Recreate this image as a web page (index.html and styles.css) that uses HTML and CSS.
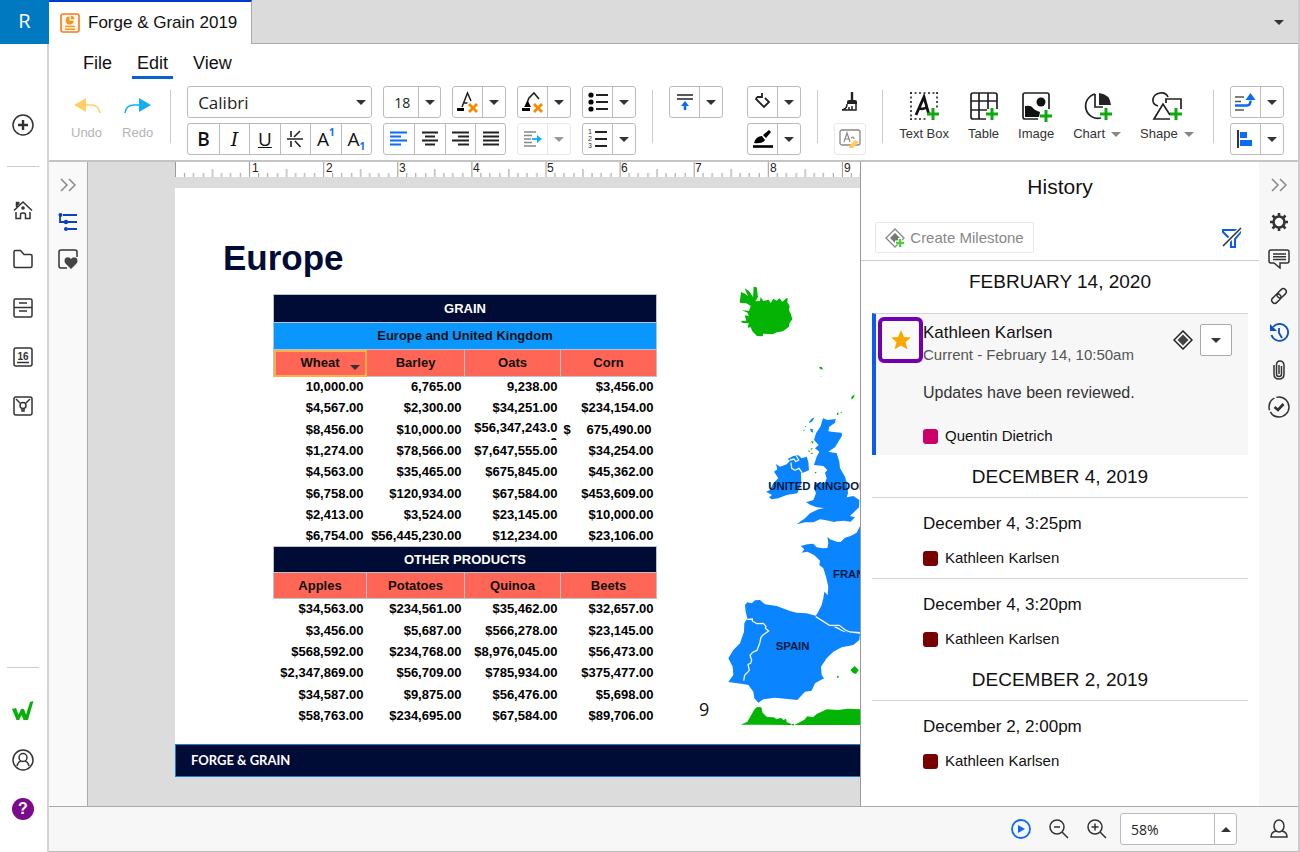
FILE: index.html
```
<!DOCTYPE html>
<html lang="en">
  <head>
    <meta charset="UTF-8" />
    <meta name="viewport" content="width=device-width, initial-scale=1.0" />
    <title>Forge &amp; Grain 2019</title>
    <link rel="stylesheet" href="styles.css">
  </head>
  <body>
    <nav class="rail">
      <a class="logo" href="#">R</a>
      <button class="rail-btn rail-first" aria-label="Create">
        <svg width="22" height="22" viewBox="0 0 22 22"><circle cx="11" cy="11" r="10"/><path d="M11 6v10M6 11h10" stroke-width="2.4"/></svg>
      </button>
      <hr>
      <button class="rail-btn" aria-label="Home">
        <svg width="20" height="20" viewBox="0 0 20 20"><path d="M1 10.500L10 2l9 8.500M3.500 7V2.500H6M3 12v6.500h4.500V14.500q0-1.500 2.500-1.500t2.500 1.500v4H17V12"/><path d="M3 2h3.500v2L3 7z" fill="#333" stroke="none"/><circle cx="10" cy="8" r="1.800" fill="#333" stroke="none"/></svg>
      </button>
      <button class="rail-btn" aria-label="Files">
        <svg width="20" height="20" viewBox="0 0 20 20"><path d="M1 17V3q0-1.500 1.500-1.500h5L11 5.500h6.500Q19 5.500 19 7v10q0 1.500-1.500 1.500h-15Q1 18.500 1 17z"/></svg>
      </button>
      <button class="rail-btn" aria-label="Records">
        <svg width="20" height="20" viewBox="0 0 20 20"><rect x="1" y="1" width="18" height="18" rx="1.500"/><path d="M1 9.500h18M6 5h8M6 13h8"/></svg>
      </button>
      <button class="rail-btn" aria-label="Calendar">
        <svg width="20" height="20" viewBox="0 0 20 20"><rect x="1" y="1" width="18" height="18" rx="2"/><path d="M4 15.500h12"/><text x="10" y="12.500" text-anchor="middle" class="cal-text">16</text></svg>
      </button>
      <button class="rail-btn" aria-label="Insights">
        <svg width="20" height="20" viewBox="0 0 20 20"><rect x="1" y="1" width="18" height="18" rx="2"/><path d="M3 3l4 4M17 3l-4 4M9 12.500v2.500h2v-2.500"/><circle cx="10" cy="9.500" r="3"/></svg>
      </button>
      <div class="spacer"></div>
      <hr>
      <button class="rail-btn" aria-label="Workiva">
        <svg width="22" height="20" viewBox="0 0 22 20"><path d="M0 8l4-1 2.500 6.500L9 8h3l2 5.500L18 1l3.500-1L16 19h-4.500l-2-5-2.300 5H4.500z" fill="#0cae0c" stroke="none"/></svg>
      </button>
      <button class="rail-btn" aria-label="Account">
        <svg width="22" height="22" viewBox="0 0 22 22"><circle cx="11" cy="11" r="10"/><circle cx="11" cy="8.500" r="4"/><path d="M5 17q1-4.500 4-5M17 17q-1-4.500-4-5"/></svg>
      </button>
      <button class="rail-btn" aria-label="Help"><span class="help">?</span></button>
    </nav>

    <div class="app">
      <header class="tabs">
        <a class="tab" href="#">
          <svg width="20" height="20" viewBox="0 0 20 20"><rect x="1" y="1" width="18" height="18" rx="2" fill="#fff7ec" stroke="#f47a20" stroke-width="1.600"/><path d="M5 13.500h10M5 16.200h10" stroke="#f7941d" stroke-width="1.500"/><path d="M9.500 3.500a4 4 0 1 0 4.200 4.200H9.500z" fill="#f7941d"/><path d="M11 2.800v3.400h3.400A3.500 3.500 0 0 0 11 2.800z" fill="#f7941d"/></svg>
          Forge &amp; Grain 2019
        </a>
        <button class="tabs-menu" aria-label="Open tabs"><i class="caret"></i></button>
      </header>

      <nav class="menu">
        <a href="#">File</a>
        <a href="#" class="active">Edit</a>
        <a href="#">View</a>
      </nav>

      <div class="toolbar">
        <div class="history-tools">
          <button class="tool off">
            <svg width="28" height="20" viewBox="0 0 28 20"><path d="M1 8l12-7v14z" fill="#ffcf66"/><path d="M12 8h6q8 0 9 8" stroke="#ffcf66" stroke-width="1.600"/></svg>
            <span>Undo</span>
          </button>
          <button class="tool off">
            <svg width="28" height="20" viewBox="0 0 28 20"><path d="M27 8L15 1v14z" fill="#12aef5"/><path d="M16 8h-6q-8 0-9 8" stroke="#12aef5" stroke-width="1.600"/></svg>
            <span>Redo</span>
          </button>
        </div>
        <div class="sep"></div>

        <div class="stack font-stack">
          <div class="pick font-pick">
            <select aria-label="Font"><option>Calibri</option></select><i class="caret"></i>
          </div>
          <div class="bar">
            <button class="glyph bold" aria-label="Bold">B</button>
            <button class="glyph italic" aria-label="Italic">I</button>
            <button class="glyph under" aria-label="Underline">U</button>
            <button aria-label="Strikethrough"><svg width="18" height="20" viewBox="0 0 18 20"><path d="M1 10h16M5 2v6M14 2L8 8M5 12v6M9 12l5.500 6" stroke="#222" stroke-width="1.600"/></svg></button>
            <button class="glyph" aria-label="Superscript">A<sup>1</sup></button>
            <button class="glyph" aria-label="Subscript">A<sub>1</sub></button>
          </div>
        </div>

        <div class="stack size-stack">
          <div class="pair">
            <div class="pick size-pick">
              <select aria-label="Font size"><option>18</option></select><i class="caret"></i>
            </div>
            <div class="bar">
              <button aria-label="Font color"><svg width="24" height="24" viewBox="0 0 24 24"><path d="M6 17L11.500 3 15 11M7.500 13h4" stroke="#222" stroke-width="1.500"/><path d="M1 18h7v3H1z" fill="#000"/><path d="M13 14l8 8M21 14l-8 8" stroke="#f58a00" stroke-width="2.800"/></svg></button>
              <button class="drop" aria-label="Font colors"><i class="caret"></i></button>
            </div>
          </div>
          <div class="bar">
            <button aria-label="Align left"><svg width="18" height="16" viewBox="0 0 18 16"><path d="M0 1.500h17M0 5.500h11M0 9.500h17M0 13.500h11" stroke="#0a6cf5" stroke-width="1.800"/></svg></button>
            <button aria-label="Align center"><svg width="18" height="16" viewBox="0 0 18 16"><path d="M1 1.500h16M4 5.500h10M1 9.500h16M4 13.500h10" stroke="#222" stroke-width="1.800"/></svg></button>
            <button aria-label="Align right"><svg width="18" height="16" viewBox="0 0 18 16"><path d="M1 1.500h17M7 5.500h11M1 9.500h17M7 13.500h11" stroke="#222" stroke-width="1.800"/></svg></button>
            <button aria-label="Justify"><svg width="18" height="16" viewBox="0 0 18 16"><path d="M1 1.500h16M1 5.500h16M1 9.500h16M1 13.500h16" stroke="#222" stroke-width="1.800"/></svg></button>
          </div>
        </div>

        <div class="stack">
          <div class="bar">
            <button aria-label="Fill color"><svg width="24" height="24" viewBox="0 0 24 24"><path d="M5 15l3-7 5-5 5 6" stroke="#222" stroke-width="1.600"/><path d="M3 17l4-6 3 6zM1 18h8v3H1z" fill="#000"/><path d="M13 14l8 8M21 14l-8 8" stroke="#f58a00" stroke-width="2.800"/></svg></button>
            <button class="drop" aria-label="Fill colors"><i class="caret"></i></button>
          </div>
          <div class="bar off">
            <button disabled aria-label="Indent"><svg width="20" height="18" viewBox="0 0 20 18"><path d="M1 2h12M1 5.500h8M1 9h7M1 12.500h8M1 16h12" stroke="#888" stroke-width="1.300"/><path d="M9 9h6" stroke="#12aef5" stroke-width="1.800"/><path d="M14 5l5 4-5 4z" fill="#12aef5"/></svg></button>
            <button disabled class="drop" aria-label="Indent options"><i class="caret"></i></button>
          </div>
        </div>

        <div class="stack">
          <div class="bar">
            <button aria-label="Bulleted list"><svg width="20" height="20" viewBox="0 0 20 20"><path d="M8 3h12M8 10h12M8 17h12" stroke="#222" stroke-width="1.800"/><circle cx="3" cy="3" r="2.600" fill="#000"/><circle cx="3" cy="10" r="2.600" fill="#000"/><circle cx="3" cy="17" r="2.600" fill="#000"/></svg></button>
            <button class="drop" aria-label="Bullet styles"><i class="caret"></i></button>
          </div>
          <div class="bar">
            <button aria-label="Numbered list"><svg width="20" height="22" viewBox="0 0 20 22"><path d="M7 4h12M7 11h12M7 18h12" stroke="#222" stroke-width="1.800"/><text class="num-text" x="0" y="6">1</text><text class="num-text" x="0" y="13">2</text><text class="num-text" x="0" y="20">3</text></svg></button>
            <button class="drop" aria-label="Number styles"><i class="caret"></i></button>
          </div>
        </div>
        <div class="sep"></div>

        <div class="stack">
          <div class="bar">
            <button aria-label="Vertical align"><svg width="18" height="20" viewBox="0 0 18 20"><path d="M1 3h16M1 7h16" stroke="#222" stroke-width="1.700"/><path d="M9 12v6" stroke="#0a6cf5" stroke-width="2.600"/><path d="M5 14l4-5 4 5z" fill="#0a6cf5"/></svg></button>
            <button class="drop" aria-label="Vertical align options"><i class="caret"></i></button>
          </div>
        </div>
        <div class="stack line-stack">
          <div class="bar">
            <button aria-label="Shape outline"><svg width="22" height="22" viewBox="0 0 22 22"><path d="M5 6h5V2M5 6l-1 2 8 8 5-5-4-4" stroke="#222" stroke-width="1.800"/></svg></button>
            <button class="drop" aria-label="Outline options"><i class="caret"></i></button>
          </div>
          <div class="bar">
            <button aria-label="Brush"><svg width="22" height="22" viewBox="0 0 22 22"><path d="M2 15q2-7 8-7l3 4q-2 4-11 3zM11 7l6-5 2 2-5 6z" fill="#000"/><path d="M1 18.500h20" stroke="#000" stroke-width="2.600"/></svg></button>
            <button class="drop" aria-label="Brush options"><i class="caret"></i></button>
          </div>
        </div>
        <div class="sep"></div>

        <div class="stack">
          <button class="plain" aria-label="Format painter"><svg width="20" height="20" viewBox="0 0 20 20"><path d="M12 0v8" stroke="#222" stroke-width="2.400"/><path d="M7 10q0-2 2-2h6q2 0 2 2v2H7z" fill="#222"/><path d="M7 12q0 5-5 6h14V12M12 14v4M9 15v3" stroke="#222" stroke-width="1.500"/></svg></button>
          <button class="plain boxed" aria-label="Clear format"><svg width="24" height="22" viewBox="0 0 24 22"><rect x="2" y="2" width="20" height="15" rx="2" stroke="#888" stroke-width="1.300"/><path d="M6 14L9 5l3 9M7 11h4M13 10q3-2 3 1" stroke="#888" stroke-width="1.200"/><path d="M11 18l6-6 4 2-6 6h-4z" fill="#ffc95c"/></svg></button>
        </div>
        <div class="sep"></div>

        <div class="insert">
          <button class="tool">
            <svg width="30" height="30" viewBox="0 0 30 30"><path d="M1 2h28M1 28h18M2 1v28M28 1v16" stroke="#222" stroke-width="1.600" stroke-dasharray="2 2.500"/><path d="M7 24L15 6l5 18M10 17q4 2 8-1" stroke="#111" stroke-width="2.800"/><path d="M24 17v12M18 23h12" class="plus"/></svg>
            <span>Text Box</span>
          </button>
          <button class="tool">
            <svg width="30" height="30" viewBox="0 0 30 30"><path d="M17 28H4q-2 0-2-2V4q0-2 2-2h22q2 0 2 2v14M2 10h26M2 19h16M10 2v26M19 2v16" stroke="#222" stroke-width="1.700"/><path d="M23 17v12M17 23h12" class="plus"/></svg>
            <span>Table</span>
          </button>
          <button class="tool">
            <svg width="30" height="30" viewBox="0 0 30 30"><path d="M17 28H4q-2 0-2-2V4q0-2 2-2h22q2 0 2 2v14" stroke="#222" stroke-width="1.700"/><path d="M4 15q6-1 8 2 1 2 7 4l-1 5H4z" fill="#111"/><circle cx="20" cy="11" r="4.500" fill="#111"/><path d="M25 19v12M19 25h12" class="plus"/></svg>
            <span>Image</span>
          </button>
          <button class="tool">
            <svg width="30" height="30" viewBox="0 0 30 30"><path d="M13 3a12 12 0 1 0 6 24M13 3v13h8" stroke="#222" stroke-width="1.700"/><path d="M17 2v12h12Q28 3 17 2z" fill="#222"/><path d="M24 17v12M18 23h12" class="plus"/></svg>
            <span>Chart <i class="caret"></i></span>
          </button>
          <button class="tool">
            <svg width="32" height="30" viewBox="0 0 32 30"><path d="M7 15Q1 13 2 8t7-6 8 4M15 12V8h15v10M9 28l-6 0 9-15 7 11M3 28h16" stroke="#222" stroke-width="1.700"/><path d="M25 17v12M19 23h12" class="plus"/></svg>
            <span>Shape <i class="caret"></i></span>
          </button>
        </div>
        <div class="sep"></div>

        <div class="stack">
          <div class="bar">
            <button aria-label="Arrange"><svg width="22" height="20" viewBox="0 0 22 20"><path d="M1 5h9M1 9.500h6M1 18h9" stroke="#555" stroke-width="1.600"/><path d="M1 13.500h12q3.500 0 3.500-5" stroke="#0a6cf5" stroke-width="2.400"/><path d="M11.500 8l5-7 5 7z" fill="#0a6cf5"/></svg></button>
            <button class="drop" aria-label="Arrange options"><i class="caret"></i></button>
          </div>
          <div class="bar">
            <button aria-label="Align objects"><svg width="20" height="20" viewBox="0 0 20 20"><path d="M3 1v18" stroke="#222" stroke-width="1.800"/><path d="M5 3h7v6H5zM5 11h12v6H5z" fill="#0a6cf5"/></svg></button>
            <button class="drop" aria-label="Align options"><i class="caret"></i></button>
          </div>
        </div>
      </div>

      <div class="workspace">
        <aside class="side">
          <button class="side-btn faint" aria-label="Expand"><svg width="16" height="16" viewBox="0 0 16 16"><path d="M1 2l6 6-6 6M9 2l6 6-6 6"/></svg></button>
          <button class="side-btn" aria-label="Outline"><svg width="20" height="18" viewBox="0 0 20 18"><path d="M5 2h14M2 2v7h5M10 9h9M10 16h9" stroke="#0b3fc4" stroke-width="1.800"/><g fill="#0b3fc4" stroke="none"><circle cx="2.500" cy="2" r="2"/><circle cx="8" cy="9" r="2.200"/><circle cx="8" cy="16" r="2"/></g></svg></button>
          <button class="side-btn" aria-label="Favorites"><svg width="20" height="20" viewBox="0 0 20 20"><path d="M9 19H3q-2 0-2-2V3q0-2 2-2h14q2 0 2 2v5"/><path d="M13 20L7.500 14.500q-2-3 0-5.500 3.500-2 5.500 1 2-3 5.500-1 2 2.500 0 5.500z" fill="#444" stroke="none"/></svg></button>
        </aside>

        <main class="canvas">
          <svg class="ruler" height="15">
            <defs>
              <pattern id="ticks" x="0" y="0" width="74.100" height="15" patternUnits="userSpaceOnUse">
                <path d="M.5 0v15M9.500 11v4M18.500 11v4M28.500 11v4M37.500 7v8M46.500 11v4M55.500 11v4M65.500 11v4" stroke="#999"/>
              </pattern>
            </defs>
            <rect width="100%" height="15" fill="#fff"/>
            <rect width="100%" height="15" fill="url(#ticks)"/>
            <text x="77" y="10">1</text><text x="151" y="10">2</text><text x="224" y="10">3</text>
            <text x="298" y="10">4</text><text x="372" y="10">5</text><text x="446" y="10">6</text>
            <text x="520" y="10">7</text><text x="595" y="10">8</text><text x="669" y="10">9</text>
          </svg>

          <section class="slide">
            <div class="slide-body">
              <div class="slide-main">
                <h1>Europe</h1>
                <table>
                  <colgroup><col class="c1"><col class="c2"><col class="c3"><col class="c4"></colgroup>
                  <tbody>
                    <tr class="band dark"><th colspan="4">GRAIN</th></tr>
                    <tr class="band blue"><th colspan="4">Europe and United Kingdom</th></tr>
                    <tr class="band red"><th class="selected">Wheat<i class="caret"></i></th><th>Barley</th><th>Oats</th><th>Corn</th></tr>
                    <tr><td>10,000.00</td><td>6,765.00</td><td>9,238.00</td><td>$3,456.00</td></tr>
                    <tr><td>$4,567.00</td><td>$2,300.00</td><td>$34,251.00</td><td>$234,154.00</td></tr>
                    <tr><td>$8,456.00</td><td>$10,000.00</td><td class="wrap"><div>$56,347,243.00</div></td><td class="money"><div><span>$</span><span>675,490.00</span></div></td></tr>
                    <tr><td>$1,274.00</td><td>$78,566.00</td><td>$7,647,555.00</td><td>$34,254.00</td></tr>
                    <tr><td>$4,563.00</td><td>$35,465.00</td><td>$675,845.00</td><td>$45,362.00</td></tr>
                    <tr><td>$6,758.00</td><td>$120,934.00</td><td>$67,584.00</td><td>$453,609.00</td></tr>
                    <tr><td>$2,413.00</td><td>$3,524.00</td><td>$23,145.00</td><td>$10,000.00</td></tr>
                    <tr><td>$6,754.00</td><td>$56,445,230.00</td><td>$12,234.00</td><td>$23,106.00</td></tr>
                    <tr class="band dark low"><th colspan="4">OTHER PRODUCTS</th></tr>
                    <tr class="band red low"><th>Apples</th><th>Potatoes</th><th>Quinoa</th><th>Beets</th></tr>
                    <tr><td>$34,563.00</td><td>$234,561.00</td><td>$35,462.00</td><td>$32,657.00</td></tr>
                    <tr><td>$3,456.00</td><td>$5,687.00</td><td>$566,278.00</td><td>$23,145.00</td></tr>
                    <tr><td>$568,592.00</td><td>$234,768.00</td><td>$8,976,045.00</td><td>$56,473.00</td></tr>
                    <tr><td>$2,347,869.00</td><td>$56,709.00</td><td>$785,934.00</td><td>$375,477.00</td></tr>
                    <tr><td>$34,587.00</td><td>$9,875.00</td><td>$56,476.00</td><td>$5,698.00</td></tr>
                    <tr><td>$58,763.00</td><td>$234,695.00</td><td>$67,584.00</td><td>$89,706.00</td></tr>
                  </tbody>
                </table>
              </div>
              <span class="page-no">9</span>
              <svg class="map" width="240" height="450" viewBox="105 30 720 1350">
                <!-- Iceland, small islands and north Africa -->
                <g fill="#04b404">
                  <path d="M153 66l12 5 9 8-10-24 13 8 12 18 2-31 9 2 4 30-8 12 14-1 2-12 8 12 16-4 6 10 8-13 10 6 8-7 9 10 12-10 4-1-1 13 7 12-2 12 6 12 4 15-8 10-2 12-18 14-18 3-13 6-28-2-2 8-17-1-14-14-5-12-9 1 3-14-19 0-4-6 16-1-5-16 12 2-3-10-17-7 21 1 5-14-13-8-20-2z"/>
                  <path d="M387 292l8-2 4 9-8-2zM391 318l3 1-1 2zM484 380l8-5 3-2-5 12-5 4zM441 430l4-3 1 6-5 3zM451 426h4v5zM345 468h5l-4 4zM340 479l5 1-4 4zM363 514l8 0-3 7zM353 543l5-2 2 5zM361 536l7-2-2 6zM360 550l8-2v5zM374 606l6 0-4 5zM431 753h4v3h-4z"/>
                  <path d="M152 1364l20-9 22-38 8-6 12 1 4 16 13 13 20 1 9 6 13-5 7 7 8-4 2 10 15 7v2zM306 1362h6v4h-6zM313 1365l30-16 9-10 17 3 12-11 30-13 34 2 27-4 40 2 300-6v53z"/>
                  <path d="M481 1200l13-12 12 12-8 12-9-3zM441 1218h5v5h-5z"/>
                </g>
                <g fill="#0a84ff">
                  <!-- Ireland -->
                  <path d="M258 582L270 590 290 583 300 572 293 567 310 558 325 556 335 565 350 560 355 575 357 600 345 606 333 610 334 640 322 670 290 675 265 685 245 688 237 682 246 675 228 665 240 660 250 640 265 625 252 605 262 598Z"/>
                  <!-- Great Britain -->
                  <path d="M357 456l8-10 9-4-7 12-9 5zM360 476l8 1 1 11-6-3zM399 445L412 450 437 447 435 458 418 470 415 484 430 486 455 488 456 497 445 515 435 532 415 545 440 550 448 575 450 595 465 620 472 645 474 670 470 682 490 678 508 690 507 712 490 728 480 738 495 742 482 755 460 752 430 755 405 750 390 748 370 757 345 757 320 763 345 745 360 730 385 718 402 714 380 712 362 705 348 697 370 690 378 670 372 655 375 640 405 638 410 625 405 608 412 600 400 588 372 585 380 560 388 545 375 535 386 525 372 510 378 490 391 470Z"/>
                  <!-- France -->
                  <path d="M332 828L352 823 370 821 380 832 398 835 412 834 415 820 412 800 420 808 440 815 452 816 465 803 482 798 500 788 509 770 560 750 825 760V1240H620L510 1090 481 1092 460 1082 440 1070 420 1070 400 1058 377 1038 385 1025 395 1005 400 985 403 965 413 975 415 950 408 920 400 895 388 885 390 872 372 855 352 845 335 848 343 838Z"/>
                  <!-- Spain and Portugal -->
                  <path d="M165 1005L172 997 185 1000 195 991 210 990 225 1003 260 1008 300 1023 320 1028 350 1030 377 1037 400 1056 430 1070 460 1085 510 1092 508 1110 490 1125 455 1132 430 1145 410 1165 393 1190 395 1215 402 1225 375 1240 365 1262 345 1265 322 1290 300 1288 255 1283 220 1288 205 1298 193 1285 190 1265 175 1245 158 1242 115 1236 130 1215 128 1190 115 1165 130 1140 150 1120 162 1085 163 1060 172 1045 167 1025Z"/>
                </g>
                <path d="M300 570l12-3 5 8 9-5-7-12M303 578l2 17 10 6 12-6 9 13M170 1048l17-1 0 6 13 8 20-1 8 9-2 6 10 8-17 12-6 7-4 18-8 21-13 6-8 9 5 14-3 10-8 3 4 18-14 15-3 16M377 1040l23 14 18 12 30 0 18 14 15 6 30 2" fill="none" stroke="#f3f0dc" stroke-width="4"/>
                <text x="235" y="660">UNITED KINGDOM</text>
                <text x="429" y="923">FRANCE</text>
                <text x="257" y="1139">SPAIN</text>
              </svg>
            </div>
            <footer class="slide-foot">FORGE &amp; GRAIN</footer>
          </section>
        </main>

        <aside class="history">
          <h2>History</h2>
          <div class="history-bar">
            <button class="milestone" disabled>
              <svg width="20" height="20" viewBox="0 0 20 20"><path d="M10 1l9 9-9 9-9-9z" stroke="#888" stroke-width="1.300"/><path d="M10 5l5 5-5 5-5-5z" fill="#777"/><path d="M15 10v9M10 14.500h9" stroke="#fff" stroke-width="4"/><path d="M15 11v8M11 15h8" stroke="#4fce3c" stroke-width="2.400"/></svg>
              Create Milestone
            </button>
            <button class="filter" aria-label="Filter"><svg width="22" height="22" viewBox="0 0 22 22"><path d="M2 3h17v3l-5 6v8h-4v-7L2 5z" stroke="#0a5cf0" stroke-width="2"/><path d="M20 1L2 19" stroke="#fff" stroke-width="4"/><path d="M20 1L2 19" stroke="#333" stroke-width="1.600"/></svg></button>
          </div>

          <div class="history-list">
            <h3 class="first">FEBRUARY 14, 2020</h3>
            <article class="entry current">
              <div class="star">
                <svg width="20" height="20" viewBox="0 0 20 20"><path d="M10 0l3 7 7 .5-5.500 4.500 2 7.500-6.500-4-6.500 4 2-7.500L0 7.500 7 7z" fill="#f9a800"/></svg>
              </div>
              <div class="entry-head">
                <div>
                  <h4>Kathleen Karlsen</h4>
                  <p class="when">Current - February 14, 10:50am</p>
                </div>
                <svg width="20" height="20" viewBox="0 0 20 20"><path d="M10 1l9 9-9 9-9-9z" stroke="#222" stroke-width="1.500"/><path d="M10 4.500l5.500 5.500-5.500 5.500L4.500 10z" fill="#444"/></svg>
                <button class="entry-menu" aria-label="Version options"><i class="caret"></i></button>
              </div>
              <p class="note">Updates have been reviewed.</p>
              <p class="who strong"><i class="swatch pink"></i>Quentin Dietrich</p>
            </article>

            <h3>DECEMBER 4, 2019</h3>
            <article class="entry">
              <h4>December 4, 3:25pm</h4>
              <p class="who"><i class="swatch"></i>Kathleen Karlsen</p>
            </article>
            <article class="entry">
              <h4>December 4, 3:20pm</h4>
              <p class="who"><i class="swatch"></i>Kathleen Karlsen</p>
            </article>

            <h3>DECEMBER 2, 2019</h3>
            <article class="entry">
              <h4>December 2, 2:00pm</h4>
              <p class="who"><i class="swatch"></i>Kathleen Karlsen</p>
            </article>
          </div>
        </aside>

        <aside class="side right">
          <button class="side-btn faint" aria-label="Collapse"><svg width="16" height="16" viewBox="0 0 16 16"><path d="M1 2l6 6-6 6M9 2l6 6-6 6"/></svg></button>
          <button class="side-btn" aria-label="Settings"><svg width="20" height="20" viewBox="0 0 20 20"><circle cx="10" cy="10" r="5.500" stroke-width="2.600"/><path d="M10 1v3M10 16v3M1 10h3M16 10h3M3.500 3.500l2.500 2.500M14 14l2.500 2.500M16.500 3.500L14 6M6 14l-2.500 2.500" stroke-width="2.600"/></svg></button>
          <button class="side-btn" aria-label="Comments"><svg width="22" height="20" viewBox="0 0 22 20"><path d="M3 1h16q2 0 2 2v9q0 2-2 2h-7l0 5-6-5H3q-2 0-2-2V3q0-2 2-2z"/><path d="M5 5h13M5 7.700h13M5 10.400h13"/></svg></button>
          <button class="side-btn" aria-label="Links"><svg width="18" height="18" viewBox="0 0 18 18"><g transform="rotate(-45 9 9)"><rect x="0" y="6" width="10.500" height="6" rx="3"/><rect x="7.500" y="6" width="10.500" height="6" rx="3"/></g></svg></button>
          <button class="side-btn" aria-label="History"><svg width="20" height="20" viewBox="0 0 20 20"><path d="M4 4a8.500 8.500 0 1 1-1.500 8" stroke="#0b4fc4" stroke-width="1.800"/><path d="M1 1v7h7z" fill="#0b4fc4" stroke="none"/><path d="M10 5v5l3 5" stroke="#0b4fc4" stroke-width="1.800"/></svg></button>
          <button class="side-btn" aria-label="Attachments"><svg width="14" height="20" viewBox="0 0 14 20"><path d="M9.500 6v8q0 2.500-2.500 2.500T4.500 14V5Q4.500 1 8 1t4 4v9q0 5-5 5t-5-5V5"/><path d="M7 5v9"/></svg></button>
          <button class="side-btn" aria-label="Tasks"><svg width="22" height="22" viewBox="0 0 22 22"><circle cx="11" cy="11" r="10" stroke-dasharray="26 2 14 2"/><path d="M6.500 11l3.500 3 5.500-6" stroke-width="2.600"/></svg></button>
        </aside>
      </div>

      <footer class="status">
        <button aria-label="Present"><svg width="20" height="20" viewBox="0 0 20 20"><circle cx="10" cy="10" r="9" stroke="#0a6cf5" stroke-width="1.800"/><path d="M7 6l7 4-7 4z" fill="#0a6cf5" stroke="none"/></svg></button>
        <button aria-label="Zoom out"><svg width="20" height="20" viewBox="0 0 20 20"><circle cx="8" cy="8" r="7"/><path d="M13 13l6 6M5 8h6"/></svg></button>
        <button aria-label="Zoom in"><svg width="20" height="20" viewBox="0 0 20 20"><circle cx="8" cy="8" r="7"/><path d="M13 13l6 6M4.500 8h7M8 4.500v7"/></svg></button>
        <div class="pick zoom-pick">
          <select aria-label="Zoom"><option>58%</option></select><i class="caret up"></i>
        </div>
        <button class="user" aria-label="Collaborators"><svg width="18" height="20" viewBox="0 0 18 20"><ellipse cx="9" cy="7" rx="5" ry="6"/><path d="M6 12q-5 1-5 6h16q0-5-5-6"/></svg></button>
      </footer>
    </div>
  </body>
</html>
```

FILE: styles.css
```
* {
  box-sizing: border-box;
}
body {
  margin: 0;
  display: flex;
  min-height: 100vh;
  font-family: "Liberation Sans", Arial, sans-serif;
  color: #111;
  background: #fff;
}
h1, h2, h3, h4, p {
  margin: 0;
  font-weight: normal;
}
a {
  color: inherit;
  text-decoration: none;
}
button {
  padding: 0;
  border: 0;
  background: none;
  color: inherit;
  font-family: inherit;
  cursor: pointer;
}
svg {
  display: block;
  flex: none;
  fill: none;
}
hr {
  width: 32px;
  height: 1px;
  margin: 17px 0 18px 7px;
  border: 0;
  background: #ccc;
}
.caret {
  width: 0;
  height: 0;
  border: 5px solid transparent;
  border-top-color: #333;
  border-bottom: 0;
}
.caret.up {
  border-top: 0;
  border-bottom: 5px solid #333;
}
.spacer {
  flex: 1;
}

/* left navigation */
.rail {
  width: 49px;
  flex: none;
  display: flex;
  flex-direction: column;
  align-items: flex-start;
  padding-bottom: 19px;
  border-right: 2px solid #d4d4d4;
}
.rail svg,
.side svg,
.status svg {
  stroke: #333;
  stroke-width: 1.5;
}
.logo {
  width: 49px;
  height: 44px;
  flex: none;
  line-height: 42px;
  text-align: center;
  font-family: "Open Sans", sans-serif;
  font-size: 20px;
  color: #fff;
  background: #0079c1;
}
.rail-btn {
  width: 46px;
  height: 49px;
  display: flex;
  align-items: center;
  justify-content: center;
}
.rail-first {
  margin-top: 56px;
}
.cal-text {
  font-size: 10px;
  font-weight: bold;
  fill: #333;
  stroke: none;
}
.help {
  width: 22px;
  height: 22px;
  border-radius: 11px;
  line-height: 22px;
  font-size: 16px;
  font-weight: bold;
  color: #fff;
  background: #7b0a8c;
}

.app {
  flex: 1;
  min-width: 0;
  display: flex;
  flex-direction: column;
  border-right: 2px solid #ccc;
  border-bottom: 1px solid #bbb;
}

/* document tabs and menu */
.tabs {
  height: 44px;
  display: flex;
  justify-content: space-between;
  background: #dbdbdb;
  box-shadow: inset 0 -1px #aaa;
}
.tab {
  display: flex;
  align-items: center;
  gap: 8px;
  padding: 0 14px 0 11px;
  border-top: 2px solid #0038d0;
  border-right: 1px solid #aaa;
  font-size: 17px;
  background: #fff;
}
.tabs-menu {
  width: 38px;
  display: flex;
  align-items: center;
  justify-content: center;
}
.menu {
  height: 36px;
  display: flex;
  gap: 15px;
  padding-left: 29px;
}
.menu a {
  height: 35px;
  line-height: 38px;
  padding: 0 5px;
  font-size: 18px;
}
.menu .active {
  border-bottom: 3px solid #0a62d0;
}

/* toolbar */
.toolbar {
  height: 82px;
  display: flex;
  padding: 6px 13px 0 22px;
  border-bottom: 2px solid #c4c4c4;
}
.toolbar > * {
  flex: none;
}
.sep {
  width: 1px;
  height: 53px;
  margin: 4px 16px 0;
  background: #ccc;
}
.stack {
  display: flex;
  flex-direction: column;
  gap: 5px;
}
.stack + .stack {
  margin-left: 11px;
}
.stack + .line-stack {
  margin-left: 24px;
}
.font-stack {
  width: 185px;
}
.size-stack {
  width: 123px;
}
.pair {
  display: flex;
  justify-content: space-between;
}
.bar {
  height: 32px;
  display: flex;
  border: 1px solid #bbb;
  border-radius: 3px;
}
.bar button {
  flex: 1 0 29px;
  display: flex;
  align-items: center;
  justify-content: center;
}
.bar button + button {
  border-left: 1px solid #bbb;
}
.bar .drop {
  flex: 0 0 23px;
}
.bar.off,
.bar.off button {
  border-color: #e8e8e8;
}
.bar.off .caret {
  border-top-color: #999;
}
.glyph {
  font-family: "Open Sans", sans-serif;
  font-size: 19px;
}
.bold {
  font-weight: 600;
}
.italic {
  font-family: "DejaVu Serif", serif;
  font-style: italic;
}
.under {
  text-decoration: underline;
}
.glyph sup,
.glyph sub {
  align-self: flex-start;
  font-size: 10px;
  font-weight: bold;
  line-height: 16px;
  color: #0a6cf5;
}
.glyph sub {
  align-self: flex-end;
}
.num-text {
  font-size: 7px;
  fill: #333;
}
.pick {
  position: relative;
  height: 32px;
}
.pick select {
  width: 100%;
  height: 100%;
  padding: 0 10px;
  border: 1px solid #bbb;
  border-radius: 3px;
  appearance: none;
  background: #fff;
  color: #222;
  font-family: "Open Sans", sans-serif;
  font-size: 14px;
}
.pick .caret {
  position: absolute;
  right: 6px;
  top: 14px;
  pointer-events: none;
}
.font-pick select {
  font-size: 17px;
}
.size-pick {
  width: 58px;
}
.size-pick::after,
.zoom-pick::after {
  content: "";
  position: absolute;
  top: 1px;
  bottom: 1px;
  right: 22px;
  width: 1px;
  background: #bbb;
}
.history-tools {
  display: flex;
  gap: 20px;
  padding-right: 1px;
}
.tool {
  display: flex;
  flex-direction: column;
  align-items: center;
  padding-top: 5px;
}
.tool span {
  display: flex;
  align-items: center;
  gap: 6px;
  line-height: 16px;
  margin-top: 5px;
  font-size: 13px;
  color: #333;
}
.tool .caret {
  border-top-color: #888;
}
.tool.off {
  padding-top: 11px;
}
.tool.off span {
  margin-top: 8px;
  color: #b4b4b4;
}
.plain {
  width: 32px;
  height: 32px;
  display: flex;
  align-items: center;
  justify-content: center;
}
.boxed {
  border: 1px solid #e8e8e8;
  border-radius: 3px;
}
.insert {
  display: flex;
  align-items: flex-start;
  gap: 19px;
  padding-right: 3px;
}
.insert .tool svg {
  overflow: visible;
}
.plus {
  stroke: #0fa80f;
  stroke-width: 3;
}

/* workspace */
.workspace {
  flex: 1;
  display: flex;
}
.side {
  width: 39px;
  flex: none;
  padding-top: 4px;
  background: #f9f9f9;
  border-right: 1px solid #aaa;
}
.side.right {
  border-right: 0;
  background: #f7f7f7;
}
.side-btn {
  width: 100%;
  height: 37px;
  display: flex;
  align-items: center;
  justify-content: center;
}
.side .faint svg {
  stroke: #888;
}
.canvas {
  flex: 1;
  min-width: 0;
  padding-left: 87px;
  overflow: hidden;
  background: #dcdcdc;
}
.ruler {
  width: 100%;
  font-size: 12px;
}
.ruler text {
  fill: #222;
}
.slide {
  width: 988px;
  margin-top: 11px;
  background: #fff;
}
.slide-body {
  display: flex;
  align-items: flex-end;
  height: 556px;
}
.slide-main {
  align-self: flex-start;
  padding: 50px 0 0 48px;
}
.slide h1 {
  line-height: 40px;
  margin-bottom: 16px;
  font-size: 35px;
  font-weight: bold;
  color: #000c36;
}
table {
  width: 383px;
  margin-left: 50px;
  table-layout: fixed;
  border-collapse: collapse;
  font-size: 13px;
}
.c1 { width: 93px; }
.c2 { width: 98px; }
.c3, .c4 { width: 96px; }
th, td {
  height: 21px;
  padding: 0 3px;
  line-height: 20px;
}
td {
  text-align: right;
  white-space: nowrap;
  font-weight: bold;
  color: #000;
}
tr:nth-child(3n) td {
  height: 22px;
}
th {
  border: 1px solid #b8c4d0;
}
.band th {
  height: 27px;
}
.band:first-child th {
  height: 28px;
}
.band.low th {
  height: 26px;
}
.dark th {
  color: #fff;
  background: #000c36;
}
.blue th {
  background: #0a96ff;
}
.red th {
  background: #ff6655;
}
.red .selected {
  position: relative;
  outline: 2px solid #f9b04a;
  outline-offset: -2px;
}
.selected .caret {
  position: absolute;
  right: 6px;
  bottom: 6px;
}
.wrap div {
  height: 20px;
  margin-left: 3px;
  overflow: hidden;
  line-height: 15px;
  white-space: normal;
  word-break: break-all;
}
.money div {
  display: flex;
  justify-content: space-between;
  padding-right: 2px;
}
.page-no {
  margin: 0 16px 24px 42px;
  line-height: 22px;
  font-family: "Open Sans", sans-serif;
  font-size: 18px;
}
.map {
  margin-bottom: 14px;
}
.map text {
  font-size: 34px;
  font-weight: bold;
  fill: #00193f;
}
.slide-foot {
  height: 33px;
  padding-left: 15px;
  border: 1px solid #1b7fc0;
  line-height: 30px;
  font-family: Lato, sans-serif;
  font-size: 13px;
  font-weight: bold;
  color: #fff;
  background: #000c36;
}

/* history panel */
.history {
  width: 399px;
  flex: none;
  border-left: 1px solid #999;
}
.history h2 {
  line-height: 24px;
  padding: 13px 0 23px;
  text-align: center;
  font-size: 21px;
}
.history-bar {
  display: flex;
  align-items: center;
  justify-content: space-between;
  padding: 0 16px 7px 14px;
  border-bottom: 1px solid #ccc;
}
.milestone {
  width: 159px;
  height: 31px;
  display: flex;
  align-items: center;
  justify-content: center;
  gap: 5px;
  border: 1px solid #e8e8e8;
  border-radius: 2px;
  font-size: 15px;
  color: #888;
}
.history-list {
  padding: 0 11px;
}
.history h3 {
  line-height: 41px;
  text-align: center;
  font-size: 19px;
}
.history h3.first {
  padding-bottom: 11px;
}
.entry {
  height: 81px;
  padding: 15px 0 0 51px;
  border-top: 1px solid #d4d4d4;
}
.entry h4 {
  line-height: 22px;
  font-size: 17px;
}
.who {
  display: flex;
  align-items: center;
  gap: 7px;
  line-height: 20px;
  margin-top: 13px;
  font-size: 15px;
}
.strong {
  margin-top: 22px;
}
.swatch {
  width: 15px;
  height: 15px;
  border-radius: 3px;
  background: #780000;
}
.pink {
  background: #cc0066;
}
.entry.current {
  position: relative;
  height: auto;
  margin-bottom: 1px;
  padding: 8px 16px 9px 47px;
  border-left: 4px solid #0a5cf0;
  background: #f7f7f7;
}
.star {
  position: absolute;
  left: 2px;
  top: 3px;
  width: 45px;
  height: 46px;
  display: flex;
  align-items: center;
  justify-content: center;
  border: 4px solid #7000b0;
  border-radius: 6px;
  background: #fafafa;
}
.entry-head {
  display: flex;
  align-items: flex-start;
  gap: 7px;
}
.entry-head > div {
  flex: 1;
}
.entry-head > svg {
  margin-top: 8px;
}
.when {
  line-height: 22px;
  font-size: 15px;
  color: #555;
}
.entry-menu {
  width: 32px;
  height: 32px;
  margin-top: 2px;
  display: flex;
  align-items: center;
  justify-content: center;
  border: 1px solid #aaa;
  border-radius: 2px;
  background: #fff;
}
.note {
  line-height: 22px;
  margin-top: 16px;
  font-size: 16px;
  color: #333;
}

/* status bar */
.status {
  height: 45px;
  display: flex;
  align-items: center;
  justify-content: flex-end;
  gap: 18px;
  padding-right: 10px;
  border-top: 1px solid #aaa;
  background: #f7f7f7;
}
.zoom-pick {
  width: 117px;
  margin-left: -5px;
}
.user {
  margin-left: 15px;
}
```
